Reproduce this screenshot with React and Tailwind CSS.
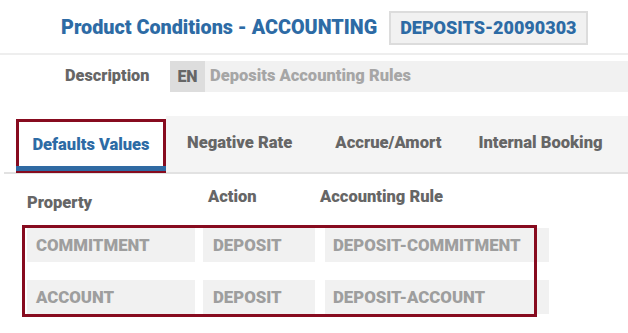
import React from "react";

const tabs = ["Negative Rate", "Accrue/Amort", "Internal Booking"];
const tabGaps = ["ml-[21px]", "ml-[43px]", "ml-[37px]"];

const rows = [
    { property: "COMMITMENT", action: "DEPOSIT", rule: "DEPOSIT-COMMITMENT" },
    { property: "ACCOUNT", action: "DEPOSIT", rule: "DEPOSIT-ACCOUNT" },
];

const App = () => {
    return (
        <div className="w-[628px] h-[333px] bg-white overflow-hidden font-['Roboto',sans-serif] font-black">
            {/* header */}
            <div className="flex items-center pl-[61px] pt-[11px] pb-[8px] border-b-2 border-[#eeeeee]">
                <h1 className="text-[19.8px] leading-none text-[#2d6ba5]">Product Conditions - ACCOUNTING</h1>
                <div className="ml-[12px] h-[34px] px-[9px] flex items-center bg-[#f1f1f1] border-2 border-[#dcdcdc] text-[18px] leading-none text-[#2d6ba5]">
                    DEPOSITS-20090303
                </div>
            </div>

            {/* description */}
            <div className="flex items-center mt-[6px] pl-[65px]">
                <span className="w-[105px] text-[16.3px] leading-none text-[#666666]">Description</span>
                <div className="flex-1 flex items-center h-[31px] bg-[#f1f1f1]">
                    <span className="w-[35px] h-full flex items-center justify-center bg-[#dddddd] text-[16px] text-[#666666]">EN</span>
                    <span className="pl-[5px] text-[16.5px] text-[#a6a6a6]">Deposits Accounting Rules</span>
                </div>
            </div>

            {/* tabs */}
            <div className="flex items-end mt-[24px] ml-[4px] border-b-2 border-[#e2e2e2]">
                <div className="w-[12px]" />
                <div className="relative w-[150px] h-[54px] -mb-[1px] bg-white border-[3px] border-[#870b1f] flex items-center justify-center">
                    <span className="-mt-[2px] text-[16.5px] leading-none text-[#2d6ba5]">Defaults Values</span>
                    <div className="absolute left-[-3px] right-[-3px] bottom-[-1px] h-[5px] bg-[#2f6aa3]" />
                </div>
                <div className="flex-1 h-[56px] bg-[#f4f4f4] flex items-center">
                    {tabs.map((t, i) => (
                        <span key={t} className={`${tabGaps[i]} -mt-[1px] text-[16.6px] leading-none text-[#666666]`}>{t}</span>
                    ))}
                </div>
            </div>

            {/* table */}
            <div className="relative pl-[27px]">
                <div className="flex h-[54px] text-[16.5px] leading-none text-[#666666]">
                    <span className="w-[181px] pt-[21px]">Property</span>
                    <span className="w-[112px] pt-[15px]">Action</span>
                    <span className="pt-[15px]">Accounting Rule</span>
                </div>
                <div className="flex flex-col gap-[18px]">
                    {rows.map(r => (
                        <div key={r.property} className="flex h-[34px] text-[16.8px] leading-none text-[#9e9e9e]">
                            <div className="w-[168px] flex items-center pl-[9px] bg-[#f1f1f1]">{r.property}</div>
                            <div className="ml-[8px] w-[112px] flex items-center pl-[10px] bg-[#f1f1f1]">{r.action}</div>
                            <div className="ml-[10px] w-[224px] flex items-center pl-[8px] bg-[#f1f1f1]">{r.rule}</div>
                        </div>
                    ))}
                </div>
                <div className="absolute left-[22px] top-[51px] w-[515px] h-[92px] border-[3px] border-[#870b1f]" />
            </div>
        </div>
    );
};

export default App;
